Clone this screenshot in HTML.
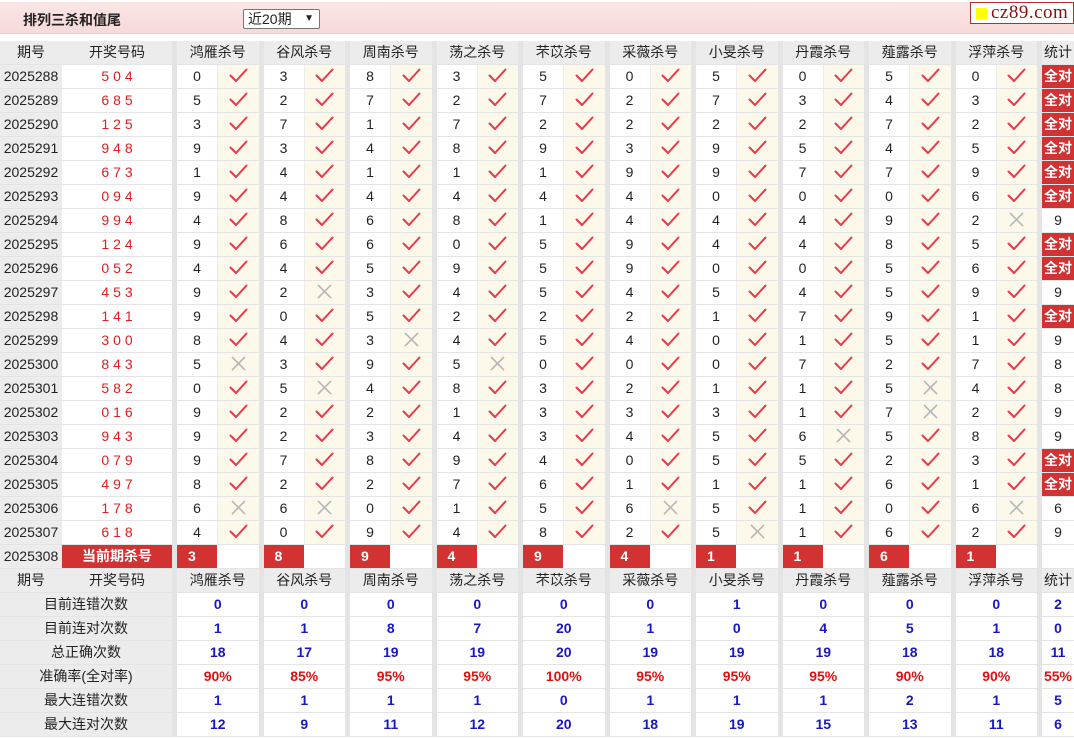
<!DOCTYPE html>
<html><head><meta charset="utf-8">
<style>
*{margin:0;padding:0;box-sizing:border-box}
body{width:1074px;height:738px;overflow:hidden;background:#fff;font-family:"Liberation Sans","Noto Sans CJK SC",sans-serif;font-size:14px;color:#222;position:relative}
.top{position:absolute;left:0;top:2px;width:1074px;height:32px;background:linear-gradient(#fbe6e6,#f7d9d9);border-bottom:1px solid #e9c9c9}
.title{position:absolute;left:23px;top:8px;font-weight:bold;font-size:14px;color:#222}
.sel{position:absolute;left:243px;top:7px;width:77px;height:20px;border:1px solid #777;background:#fff;border-radius:2px;font-size:14px;line-height:18px;padding-left:4px}
.sel b{position:absolute;right:5px;top:0;font-size:10px}
.logo{position:absolute;left:970px;top:0;width:104px;height:22px;background:#fff;border:1px solid #b03030;font-family:"Liberation Serif",serif;font-size:19px;color:#8a1010;line-height:20px;padding-left:20px;letter-spacing:0.5px}
.logo:before{content:"";position:absolute;left:5px;top:5px;width:11px;height:11px;background:#ffff00}
.tb{position:absolute;left:0;top:41px;width:1074px;background:#e4e4e4}
.r{display:flex;height:24px;padding-bottom:1px}
.r i{font-style:normal;display:block;height:23px;line-height:23px;text-align:center;white-space:nowrap;overflow:hidden}
.a{width:62px;background:#ececec}
.b{width:110px;background:#fff;margin-right:5px;color:#e02020;letter-spacing:4px;padding-left:4px}
.n{width:40px;background:#fff;text-align:center}
.c{width:41.5px;background:#fdf9ea;margin-right:5px;border-left:1px solid #ececec}
.s{width:32px;background:#fff}
.t{background:#d23232!important;color:#fff;font-weight:bold}
.h i{background:#ececec}
.h .g{width:81.5px;margin-right:5px;background:#ececec}
.h .b{color:#222;letter-spacing:0;background:#ececec;padding-left:0}
.cur .b{background:#d23232;color:#fff;font-weight:bold;letter-spacing:0;padding-left:0}
.cur .n{background:#d23232;color:#fff;font-weight:bold;text-align:left;padding-left:11px}
.cur .c{background:#fff;border-left:none}
.st i{font-weight:bold;color:#1818c0;font-size:14px}
.st .l{width:172px;margin-right:5px;background:#ececec;color:#222;font-weight:normal}
.st .g{width:81.5px;margin-right:5px;background:#fff}
.st .s{background:#fff}
.p i.g,.p i.s{color:#e01010}
svg{display:inline-block;vertical-align:middle;margin-top:-3px}
.k{width:19px;height:15px;fill:none;stroke:#e8384a;stroke-width:2;stroke-linecap:round;stroke-linejoin:round}
.x{width:15px;height:15px;fill:none;stroke:#b8b8b8;stroke-width:1.6}
</style></head><body>
<div class="top"><div class="title">排列三杀和值尾</div><div class="sel">近20期<b>&#9660;</b></div><div class="logo">cz89.com</div></div>
<div class="tb">
<div class="r h"><i class="a">期号</i><i class="b">开奖号码</i><i class="g">鸿雁杀号</i><i class="g">谷风杀号</i><i class="g">周南杀号</i><i class="g">荡之杀号</i><i class="g">芣苡杀号</i><i class="g">采薇杀号</i><i class="g">小旻杀号</i><i class="g">丹霞杀号</i><i class="g">薤露杀号</i><i class="g">浮萍杀号</i><i class="s">统计</i></div>

<div class="r"><i class="a">2025288</i><i class="b">504</i><i class="n">0</i><i class="c"><svg class="k" viewBox="0 0 19 15"><path d="M1.5 7.5L7 13L17.5 1.5"/></svg></i><i class="n">3</i><i class="c"><svg class="k" viewBox="0 0 19 15"><path d="M1.5 7.5L7 13L17.5 1.5"/></svg></i><i class="n">8</i><i class="c"><svg class="k" viewBox="0 0 19 15"><path d="M1.5 7.5L7 13L17.5 1.5"/></svg></i><i class="n">3</i><i class="c"><svg class="k" viewBox="0 0 19 15"><path d="M1.5 7.5L7 13L17.5 1.5"/></svg></i><i class="n">5</i><i class="c"><svg class="k" viewBox="0 0 19 15"><path d="M1.5 7.5L7 13L17.5 1.5"/></svg></i><i class="n">0</i><i class="c"><svg class="k" viewBox="0 0 19 15"><path d="M1.5 7.5L7 13L17.5 1.5"/></svg></i><i class="n">5</i><i class="c"><svg class="k" viewBox="0 0 19 15"><path d="M1.5 7.5L7 13L17.5 1.5"/></svg></i><i class="n">0</i><i class="c"><svg class="k" viewBox="0 0 19 15"><path d="M1.5 7.5L7 13L17.5 1.5"/></svg></i><i class="n">5</i><i class="c"><svg class="k" viewBox="0 0 19 15"><path d="M1.5 7.5L7 13L17.5 1.5"/></svg></i><i class="n">0</i><i class="c"><svg class="k" viewBox="0 0 19 15"><path d="M1.5 7.5L7 13L17.5 1.5"/></svg></i><i class="s t">全对</i></div>

<div class="r"><i class="a">2025289</i><i class="b">685</i><i class="n">5</i><i class="c"><svg class="k" viewBox="0 0 19 15"><path d="M1.5 7.5L7 13L17.5 1.5"/></svg></i><i class="n">2</i><i class="c"><svg class="k" viewBox="0 0 19 15"><path d="M1.5 7.5L7 13L17.5 1.5"/></svg></i><i class="n">7</i><i class="c"><svg class="k" viewBox="0 0 19 15"><path d="M1.5 7.5L7 13L17.5 1.5"/></svg></i><i class="n">2</i><i class="c"><svg class="k" viewBox="0 0 19 15"><path d="M1.5 7.5L7 13L17.5 1.5"/></svg></i><i class="n">7</i><i class="c"><svg class="k" viewBox="0 0 19 15"><path d="M1.5 7.5L7 13L17.5 1.5"/></svg></i><i class="n">2</i><i class="c"><svg class="k" viewBox="0 0 19 15"><path d="M1.5 7.5L7 13L17.5 1.5"/></svg></i><i class="n">7</i><i class="c"><svg class="k" viewBox="0 0 19 15"><path d="M1.5 7.5L7 13L17.5 1.5"/></svg></i><i class="n">3</i><i class="c"><svg class="k" viewBox="0 0 19 15"><path d="M1.5 7.5L7 13L17.5 1.5"/></svg></i><i class="n">4</i><i class="c"><svg class="k" viewBox="0 0 19 15"><path d="M1.5 7.5L7 13L17.5 1.5"/></svg></i><i class="n">3</i><i class="c"><svg class="k" viewBox="0 0 19 15"><path d="M1.5 7.5L7 13L17.5 1.5"/></svg></i><i class="s t">全对</i></div>

<div class="r"><i class="a">2025290</i><i class="b">125</i><i class="n">3</i><i class="c"><svg class="k" viewBox="0 0 19 15"><path d="M1.5 7.5L7 13L17.5 1.5"/></svg></i><i class="n">7</i><i class="c"><svg class="k" viewBox="0 0 19 15"><path d="M1.5 7.5L7 13L17.5 1.5"/></svg></i><i class="n">1</i><i class="c"><svg class="k" viewBox="0 0 19 15"><path d="M1.5 7.5L7 13L17.5 1.5"/></svg></i><i class="n">7</i><i class="c"><svg class="k" viewBox="0 0 19 15"><path d="M1.5 7.5L7 13L17.5 1.5"/></svg></i><i class="n">2</i><i class="c"><svg class="k" viewBox="0 0 19 15"><path d="M1.5 7.5L7 13L17.5 1.5"/></svg></i><i class="n">2</i><i class="c"><svg class="k" viewBox="0 0 19 15"><path d="M1.5 7.5L7 13L17.5 1.5"/></svg></i><i class="n">2</i><i class="c"><svg class="k" viewBox="0 0 19 15"><path d="M1.5 7.5L7 13L17.5 1.5"/></svg></i><i class="n">2</i><i class="c"><svg class="k" viewBox="0 0 19 15"><path d="M1.5 7.5L7 13L17.5 1.5"/></svg></i><i class="n">7</i><i class="c"><svg class="k" viewBox="0 0 19 15"><path d="M1.5 7.5L7 13L17.5 1.5"/></svg></i><i class="n">2</i><i class="c"><svg class="k" viewBox="0 0 19 15"><path d="M1.5 7.5L7 13L17.5 1.5"/></svg></i><i class="s t">全对</i></div>

<div class="r"><i class="a">2025291</i><i class="b">948</i><i class="n">9</i><i class="c"><svg class="k" viewBox="0 0 19 15"><path d="M1.5 7.5L7 13L17.5 1.5"/></svg></i><i class="n">3</i><i class="c"><svg class="k" viewBox="0 0 19 15"><path d="M1.5 7.5L7 13L17.5 1.5"/></svg></i><i class="n">4</i><i class="c"><svg class="k" viewBox="0 0 19 15"><path d="M1.5 7.5L7 13L17.5 1.5"/></svg></i><i class="n">8</i><i class="c"><svg class="k" viewBox="0 0 19 15"><path d="M1.5 7.5L7 13L17.5 1.5"/></svg></i><i class="n">9</i><i class="c"><svg class="k" viewBox="0 0 19 15"><path d="M1.5 7.5L7 13L17.5 1.5"/></svg></i><i class="n">3</i><i class="c"><svg class="k" viewBox="0 0 19 15"><path d="M1.5 7.5L7 13L17.5 1.5"/></svg></i><i class="n">9</i><i class="c"><svg class="k" viewBox="0 0 19 15"><path d="M1.5 7.5L7 13L17.5 1.5"/></svg></i><i class="n">5</i><i class="c"><svg class="k" viewBox="0 0 19 15"><path d="M1.5 7.5L7 13L17.5 1.5"/></svg></i><i class="n">4</i><i class="c"><svg class="k" viewBox="0 0 19 15"><path d="M1.5 7.5L7 13L17.5 1.5"/></svg></i><i class="n">5</i><i class="c"><svg class="k" viewBox="0 0 19 15"><path d="M1.5 7.5L7 13L17.5 1.5"/></svg></i><i class="s t">全对</i></div>

<div class="r"><i class="a">2025292</i><i class="b">673</i><i class="n">1</i><i class="c"><svg class="k" viewBox="0 0 19 15"><path d="M1.5 7.5L7 13L17.5 1.5"/></svg></i><i class="n">4</i><i class="c"><svg class="k" viewBox="0 0 19 15"><path d="M1.5 7.5L7 13L17.5 1.5"/></svg></i><i class="n">1</i><i class="c"><svg class="k" viewBox="0 0 19 15"><path d="M1.5 7.5L7 13L17.5 1.5"/></svg></i><i class="n">1</i><i class="c"><svg class="k" viewBox="0 0 19 15"><path d="M1.5 7.5L7 13L17.5 1.5"/></svg></i><i class="n">1</i><i class="c"><svg class="k" viewBox="0 0 19 15"><path d="M1.5 7.5L7 13L17.5 1.5"/></svg></i><i class="n">9</i><i class="c"><svg class="k" viewBox="0 0 19 15"><path d="M1.5 7.5L7 13L17.5 1.5"/></svg></i><i class="n">9</i><i class="c"><svg class="k" viewBox="0 0 19 15"><path d="M1.5 7.5L7 13L17.5 1.5"/></svg></i><i class="n">7</i><i class="c"><svg class="k" viewBox="0 0 19 15"><path d="M1.5 7.5L7 13L17.5 1.5"/></svg></i><i class="n">7</i><i class="c"><svg class="k" viewBox="0 0 19 15"><path d="M1.5 7.5L7 13L17.5 1.5"/></svg></i><i class="n">9</i><i class="c"><svg class="k" viewBox="0 0 19 15"><path d="M1.5 7.5L7 13L17.5 1.5"/></svg></i><i class="s t">全对</i></div>

<div class="r"><i class="a">2025293</i><i class="b">094</i><i class="n">9</i><i class="c"><svg class="k" viewBox="0 0 19 15"><path d="M1.5 7.5L7 13L17.5 1.5"/></svg></i><i class="n">4</i><i class="c"><svg class="k" viewBox="0 0 19 15"><path d="M1.5 7.5L7 13L17.5 1.5"/></svg></i><i class="n">4</i><i class="c"><svg class="k" viewBox="0 0 19 15"><path d="M1.5 7.5L7 13L17.5 1.5"/></svg></i><i class="n">4</i><i class="c"><svg class="k" viewBox="0 0 19 15"><path d="M1.5 7.5L7 13L17.5 1.5"/></svg></i><i class="n">4</i><i class="c"><svg class="k" viewBox="0 0 19 15"><path d="M1.5 7.5L7 13L17.5 1.5"/></svg></i><i class="n">4</i><i class="c"><svg class="k" viewBox="0 0 19 15"><path d="M1.5 7.5L7 13L17.5 1.5"/></svg></i><i class="n">0</i><i class="c"><svg class="k" viewBox="0 0 19 15"><path d="M1.5 7.5L7 13L17.5 1.5"/></svg></i><i class="n">0</i><i class="c"><svg class="k" viewBox="0 0 19 15"><path d="M1.5 7.5L7 13L17.5 1.5"/></svg></i><i class="n">0</i><i class="c"><svg class="k" viewBox="0 0 19 15"><path d="M1.5 7.5L7 13L17.5 1.5"/></svg></i><i class="n">6</i><i class="c"><svg class="k" viewBox="0 0 19 15"><path d="M1.5 7.5L7 13L17.5 1.5"/></svg></i><i class="s t">全对</i></div>

<div class="r"><i class="a">2025294</i><i class="b">994</i><i class="n">4</i><i class="c"><svg class="k" viewBox="0 0 19 15"><path d="M1.5 7.5L7 13L17.5 1.5"/></svg></i><i class="n">8</i><i class="c"><svg class="k" viewBox="0 0 19 15"><path d="M1.5 7.5L7 13L17.5 1.5"/></svg></i><i class="n">6</i><i class="c"><svg class="k" viewBox="0 0 19 15"><path d="M1.5 7.5L7 13L17.5 1.5"/></svg></i><i class="n">8</i><i class="c"><svg class="k" viewBox="0 0 19 15"><path d="M1.5 7.5L7 13L17.5 1.5"/></svg></i><i class="n">1</i><i class="c"><svg class="k" viewBox="0 0 19 15"><path d="M1.5 7.5L7 13L17.5 1.5"/></svg></i><i class="n">4</i><i class="c"><svg class="k" viewBox="0 0 19 15"><path d="M1.5 7.5L7 13L17.5 1.5"/></svg></i><i class="n">4</i><i class="c"><svg class="k" viewBox="0 0 19 15"><path d="M1.5 7.5L7 13L17.5 1.5"/></svg></i><i class="n">4</i><i class="c"><svg class="k" viewBox="0 0 19 15"><path d="M1.5 7.5L7 13L17.5 1.5"/></svg></i><i class="n">9</i><i class="c"><svg class="k" viewBox="0 0 19 15"><path d="M1.5 7.5L7 13L17.5 1.5"/></svg></i><i class="n">2</i><i class="c"><svg class="x" viewBox="0 0 15 15"><path d="M1 1L14 14M14 1L1 14"/></svg></i><i class="s">9</i></div>

<div class="r"><i class="a">2025295</i><i class="b">124</i><i class="n">9</i><i class="c"><svg class="k" viewBox="0 0 19 15"><path d="M1.5 7.5L7 13L17.5 1.5"/></svg></i><i class="n">6</i><i class="c"><svg class="k" viewBox="0 0 19 15"><path d="M1.5 7.5L7 13L17.5 1.5"/></svg></i><i class="n">6</i><i class="c"><svg class="k" viewBox="0 0 19 15"><path d="M1.5 7.5L7 13L17.5 1.5"/></svg></i><i class="n">0</i><i class="c"><svg class="k" viewBox="0 0 19 15"><path d="M1.5 7.5L7 13L17.5 1.5"/></svg></i><i class="n">5</i><i class="c"><svg class="k" viewBox="0 0 19 15"><path d="M1.5 7.5L7 13L17.5 1.5"/></svg></i><i class="n">9</i><i class="c"><svg class="k" viewBox="0 0 19 15"><path d="M1.5 7.5L7 13L17.5 1.5"/></svg></i><i class="n">4</i><i class="c"><svg class="k" viewBox="0 0 19 15"><path d="M1.5 7.5L7 13L17.5 1.5"/></svg></i><i class="n">4</i><i class="c"><svg class="k" viewBox="0 0 19 15"><path d="M1.5 7.5L7 13L17.5 1.5"/></svg></i><i class="n">8</i><i class="c"><svg class="k" viewBox="0 0 19 15"><path d="M1.5 7.5L7 13L17.5 1.5"/></svg></i><i class="n">5</i><i class="c"><svg class="k" viewBox="0 0 19 15"><path d="M1.5 7.5L7 13L17.5 1.5"/></svg></i><i class="s t">全对</i></div>

<div class="r"><i class="a">2025296</i><i class="b">052</i><i class="n">4</i><i class="c"><svg class="k" viewBox="0 0 19 15"><path d="M1.5 7.5L7 13L17.5 1.5"/></svg></i><i class="n">4</i><i class="c"><svg class="k" viewBox="0 0 19 15"><path d="M1.5 7.5L7 13L17.5 1.5"/></svg></i><i class="n">5</i><i class="c"><svg class="k" viewBox="0 0 19 15"><path d="M1.5 7.5L7 13L17.5 1.5"/></svg></i><i class="n">9</i><i class="c"><svg class="k" viewBox="0 0 19 15"><path d="M1.5 7.5L7 13L17.5 1.5"/></svg></i><i class="n">5</i><i class="c"><svg class="k" viewBox="0 0 19 15"><path d="M1.5 7.5L7 13L17.5 1.5"/></svg></i><i class="n">9</i><i class="c"><svg class="k" viewBox="0 0 19 15"><path d="M1.5 7.5L7 13L17.5 1.5"/></svg></i><i class="n">0</i><i class="c"><svg class="k" viewBox="0 0 19 15"><path d="M1.5 7.5L7 13L17.5 1.5"/></svg></i><i class="n">0</i><i class="c"><svg class="k" viewBox="0 0 19 15"><path d="M1.5 7.5L7 13L17.5 1.5"/></svg></i><i class="n">5</i><i class="c"><svg class="k" viewBox="0 0 19 15"><path d="M1.5 7.5L7 13L17.5 1.5"/></svg></i><i class="n">6</i><i class="c"><svg class="k" viewBox="0 0 19 15"><path d="M1.5 7.5L7 13L17.5 1.5"/></svg></i><i class="s t">全对</i></div>

<div class="r"><i class="a">2025297</i><i class="b">453</i><i class="n">9</i><i class="c"><svg class="k" viewBox="0 0 19 15"><path d="M1.5 7.5L7 13L17.5 1.5"/></svg></i><i class="n">2</i><i class="c"><svg class="x" viewBox="0 0 15 15"><path d="M1 1L14 14M14 1L1 14"/></svg></i><i class="n">3</i><i class="c"><svg class="k" viewBox="0 0 19 15"><path d="M1.5 7.5L7 13L17.5 1.5"/></svg></i><i class="n">4</i><i class="c"><svg class="k" viewBox="0 0 19 15"><path d="M1.5 7.5L7 13L17.5 1.5"/></svg></i><i class="n">5</i><i class="c"><svg class="k" viewBox="0 0 19 15"><path d="M1.5 7.5L7 13L17.5 1.5"/></svg></i><i class="n">4</i><i class="c"><svg class="k" viewBox="0 0 19 15"><path d="M1.5 7.5L7 13L17.5 1.5"/></svg></i><i class="n">5</i><i class="c"><svg class="k" viewBox="0 0 19 15"><path d="M1.5 7.5L7 13L17.5 1.5"/></svg></i><i class="n">4</i><i class="c"><svg class="k" viewBox="0 0 19 15"><path d="M1.5 7.5L7 13L17.5 1.5"/></svg></i><i class="n">5</i><i class="c"><svg class="k" viewBox="0 0 19 15"><path d="M1.5 7.5L7 13L17.5 1.5"/></svg></i><i class="n">9</i><i class="c"><svg class="k" viewBox="0 0 19 15"><path d="M1.5 7.5L7 13L17.5 1.5"/></svg></i><i class="s">9</i></div>

<div class="r"><i class="a">2025298</i><i class="b">141</i><i class="n">9</i><i class="c"><svg class="k" viewBox="0 0 19 15"><path d="M1.5 7.5L7 13L17.5 1.5"/></svg></i><i class="n">0</i><i class="c"><svg class="k" viewBox="0 0 19 15"><path d="M1.5 7.5L7 13L17.5 1.5"/></svg></i><i class="n">5</i><i class="c"><svg class="k" viewBox="0 0 19 15"><path d="M1.5 7.5L7 13L17.5 1.5"/></svg></i><i class="n">2</i><i class="c"><svg class="k" viewBox="0 0 19 15"><path d="M1.5 7.5L7 13L17.5 1.5"/></svg></i><i class="n">2</i><i class="c"><svg class="k" viewBox="0 0 19 15"><path d="M1.5 7.5L7 13L17.5 1.5"/></svg></i><i class="n">2</i><i class="c"><svg class="k" viewBox="0 0 19 15"><path d="M1.5 7.5L7 13L17.5 1.5"/></svg></i><i class="n">1</i><i class="c"><svg class="k" viewBox="0 0 19 15"><path d="M1.5 7.5L7 13L17.5 1.5"/></svg></i><i class="n">7</i><i class="c"><svg class="k" viewBox="0 0 19 15"><path d="M1.5 7.5L7 13L17.5 1.5"/></svg></i><i class="n">9</i><i class="c"><svg class="k" viewBox="0 0 19 15"><path d="M1.5 7.5L7 13L17.5 1.5"/></svg></i><i class="n">1</i><i class="c"><svg class="k" viewBox="0 0 19 15"><path d="M1.5 7.5L7 13L17.5 1.5"/></svg></i><i class="s t">全对</i></div>

<div class="r"><i class="a">2025299</i><i class="b">300</i><i class="n">8</i><i class="c"><svg class="k" viewBox="0 0 19 15"><path d="M1.5 7.5L7 13L17.5 1.5"/></svg></i><i class="n">4</i><i class="c"><svg class="k" viewBox="0 0 19 15"><path d="M1.5 7.5L7 13L17.5 1.5"/></svg></i><i class="n">3</i><i class="c"><svg class="x" viewBox="0 0 15 15"><path d="M1 1L14 14M14 1L1 14"/></svg></i><i class="n">4</i><i class="c"><svg class="k" viewBox="0 0 19 15"><path d="M1.5 7.5L7 13L17.5 1.5"/></svg></i><i class="n">5</i><i class="c"><svg class="k" viewBox="0 0 19 15"><path d="M1.5 7.5L7 13L17.5 1.5"/></svg></i><i class="n">4</i><i class="c"><svg class="k" viewBox="0 0 19 15"><path d="M1.5 7.5L7 13L17.5 1.5"/></svg></i><i class="n">0</i><i class="c"><svg class="k" viewBox="0 0 19 15"><path d="M1.5 7.5L7 13L17.5 1.5"/></svg></i><i class="n">1</i><i class="c"><svg class="k" viewBox="0 0 19 15"><path d="M1.5 7.5L7 13L17.5 1.5"/></svg></i><i class="n">5</i><i class="c"><svg class="k" viewBox="0 0 19 15"><path d="M1.5 7.5L7 13L17.5 1.5"/></svg></i><i class="n">1</i><i class="c"><svg class="k" viewBox="0 0 19 15"><path d="M1.5 7.5L7 13L17.5 1.5"/></svg></i><i class="s">9</i></div>

<div class="r"><i class="a">2025300</i><i class="b">843</i><i class="n">5</i><i class="c"><svg class="x" viewBox="0 0 15 15"><path d="M1 1L14 14M14 1L1 14"/></svg></i><i class="n">3</i><i class="c"><svg class="k" viewBox="0 0 19 15"><path d="M1.5 7.5L7 13L17.5 1.5"/></svg></i><i class="n">9</i><i class="c"><svg class="k" viewBox="0 0 19 15"><path d="M1.5 7.5L7 13L17.5 1.5"/></svg></i><i class="n">5</i><i class="c"><svg class="x" viewBox="0 0 15 15"><path d="M1 1L14 14M14 1L1 14"/></svg></i><i class="n">0</i><i class="c"><svg class="k" viewBox="0 0 19 15"><path d="M1.5 7.5L7 13L17.5 1.5"/></svg></i><i class="n">0</i><i class="c"><svg class="k" viewBox="0 0 19 15"><path d="M1.5 7.5L7 13L17.5 1.5"/></svg></i><i class="n">0</i><i class="c"><svg class="k" viewBox="0 0 19 15"><path d="M1.5 7.5L7 13L17.5 1.5"/></svg></i><i class="n">7</i><i class="c"><svg class="k" viewBox="0 0 19 15"><path d="M1.5 7.5L7 13L17.5 1.5"/></svg></i><i class="n">2</i><i class="c"><svg class="k" viewBox="0 0 19 15"><path d="M1.5 7.5L7 13L17.5 1.5"/></svg></i><i class="n">7</i><i class="c"><svg class="k" viewBox="0 0 19 15"><path d="M1.5 7.5L7 13L17.5 1.5"/></svg></i><i class="s">8</i></div>

<div class="r"><i class="a">2025301</i><i class="b">582</i><i class="n">0</i><i class="c"><svg class="k" viewBox="0 0 19 15"><path d="M1.5 7.5L7 13L17.5 1.5"/></svg></i><i class="n">5</i><i class="c"><svg class="x" viewBox="0 0 15 15"><path d="M1 1L14 14M14 1L1 14"/></svg></i><i class="n">4</i><i class="c"><svg class="k" viewBox="0 0 19 15"><path d="M1.5 7.5L7 13L17.5 1.5"/></svg></i><i class="n">8</i><i class="c"><svg class="k" viewBox="0 0 19 15"><path d="M1.5 7.5L7 13L17.5 1.5"/></svg></i><i class="n">3</i><i class="c"><svg class="k" viewBox="0 0 19 15"><path d="M1.5 7.5L7 13L17.5 1.5"/></svg></i><i class="n">2</i><i class="c"><svg class="k" viewBox="0 0 19 15"><path d="M1.5 7.5L7 13L17.5 1.5"/></svg></i><i class="n">1</i><i class="c"><svg class="k" viewBox="0 0 19 15"><path d="M1.5 7.5L7 13L17.5 1.5"/></svg></i><i class="n">1</i><i class="c"><svg class="k" viewBox="0 0 19 15"><path d="M1.5 7.5L7 13L17.5 1.5"/></svg></i><i class="n">5</i><i class="c"><svg class="x" viewBox="0 0 15 15"><path d="M1 1L14 14M14 1L1 14"/></svg></i><i class="n">4</i><i class="c"><svg class="k" viewBox="0 0 19 15"><path d="M1.5 7.5L7 13L17.5 1.5"/></svg></i><i class="s">8</i></div>

<div class="r"><i class="a">2025302</i><i class="b">016</i><i class="n">9</i><i class="c"><svg class="k" viewBox="0 0 19 15"><path d="M1.5 7.5L7 13L17.5 1.5"/></svg></i><i class="n">2</i><i class="c"><svg class="k" viewBox="0 0 19 15"><path d="M1.5 7.5L7 13L17.5 1.5"/></svg></i><i class="n">2</i><i class="c"><svg class="k" viewBox="0 0 19 15"><path d="M1.5 7.5L7 13L17.5 1.5"/></svg></i><i class="n">1</i><i class="c"><svg class="k" viewBox="0 0 19 15"><path d="M1.5 7.5L7 13L17.5 1.5"/></svg></i><i class="n">3</i><i class="c"><svg class="k" viewBox="0 0 19 15"><path d="M1.5 7.5L7 13L17.5 1.5"/></svg></i><i class="n">3</i><i class="c"><svg class="k" viewBox="0 0 19 15"><path d="M1.5 7.5L7 13L17.5 1.5"/></svg></i><i class="n">3</i><i class="c"><svg class="k" viewBox="0 0 19 15"><path d="M1.5 7.5L7 13L17.5 1.5"/></svg></i><i class="n">1</i><i class="c"><svg class="k" viewBox="0 0 19 15"><path d="M1.5 7.5L7 13L17.5 1.5"/></svg></i><i class="n">7</i><i class="c"><svg class="x" viewBox="0 0 15 15"><path d="M1 1L14 14M14 1L1 14"/></svg></i><i class="n">2</i><i class="c"><svg class="k" viewBox="0 0 19 15"><path d="M1.5 7.5L7 13L17.5 1.5"/></svg></i><i class="s">9</i></div>

<div class="r"><i class="a">2025303</i><i class="b">943</i><i class="n">9</i><i class="c"><svg class="k" viewBox="0 0 19 15"><path d="M1.5 7.5L7 13L17.5 1.5"/></svg></i><i class="n">2</i><i class="c"><svg class="k" viewBox="0 0 19 15"><path d="M1.5 7.5L7 13L17.5 1.5"/></svg></i><i class="n">3</i><i class="c"><svg class="k" viewBox="0 0 19 15"><path d="M1.5 7.5L7 13L17.5 1.5"/></svg></i><i class="n">4</i><i class="c"><svg class="k" viewBox="0 0 19 15"><path d="M1.5 7.5L7 13L17.5 1.5"/></svg></i><i class="n">3</i><i class="c"><svg class="k" viewBox="0 0 19 15"><path d="M1.5 7.5L7 13L17.5 1.5"/></svg></i><i class="n">4</i><i class="c"><svg class="k" viewBox="0 0 19 15"><path d="M1.5 7.5L7 13L17.5 1.5"/></svg></i><i class="n">5</i><i class="c"><svg class="k" viewBox="0 0 19 15"><path d="M1.5 7.5L7 13L17.5 1.5"/></svg></i><i class="n">6</i><i class="c"><svg class="x" viewBox="0 0 15 15"><path d="M1 1L14 14M14 1L1 14"/></svg></i><i class="n">5</i><i class="c"><svg class="k" viewBox="0 0 19 15"><path d="M1.5 7.5L7 13L17.5 1.5"/></svg></i><i class="n">8</i><i class="c"><svg class="k" viewBox="0 0 19 15"><path d="M1.5 7.5L7 13L17.5 1.5"/></svg></i><i class="s">9</i></div>

<div class="r"><i class="a">2025304</i><i class="b">079</i><i class="n">9</i><i class="c"><svg class="k" viewBox="0 0 19 15"><path d="M1.5 7.5L7 13L17.5 1.5"/></svg></i><i class="n">7</i><i class="c"><svg class="k" viewBox="0 0 19 15"><path d="M1.5 7.5L7 13L17.5 1.5"/></svg></i><i class="n">8</i><i class="c"><svg class="k" viewBox="0 0 19 15"><path d="M1.5 7.5L7 13L17.5 1.5"/></svg></i><i class="n">9</i><i class="c"><svg class="k" viewBox="0 0 19 15"><path d="M1.5 7.5L7 13L17.5 1.5"/></svg></i><i class="n">4</i><i class="c"><svg class="k" viewBox="0 0 19 15"><path d="M1.5 7.5L7 13L17.5 1.5"/></svg></i><i class="n">0</i><i class="c"><svg class="k" viewBox="0 0 19 15"><path d="M1.5 7.5L7 13L17.5 1.5"/></svg></i><i class="n">5</i><i class="c"><svg class="k" viewBox="0 0 19 15"><path d="M1.5 7.5L7 13L17.5 1.5"/></svg></i><i class="n">5</i><i class="c"><svg class="k" viewBox="0 0 19 15"><path d="M1.5 7.5L7 13L17.5 1.5"/></svg></i><i class="n">2</i><i class="c"><svg class="k" viewBox="0 0 19 15"><path d="M1.5 7.5L7 13L17.5 1.5"/></svg></i><i class="n">3</i><i class="c"><svg class="k" viewBox="0 0 19 15"><path d="M1.5 7.5L7 13L17.5 1.5"/></svg></i><i class="s t">全对</i></div>

<div class="r"><i class="a">2025305</i><i class="b">497</i><i class="n">8</i><i class="c"><svg class="k" viewBox="0 0 19 15"><path d="M1.5 7.5L7 13L17.5 1.5"/></svg></i><i class="n">2</i><i class="c"><svg class="k" viewBox="0 0 19 15"><path d="M1.5 7.5L7 13L17.5 1.5"/></svg></i><i class="n">2</i><i class="c"><svg class="k" viewBox="0 0 19 15"><path d="M1.5 7.5L7 13L17.5 1.5"/></svg></i><i class="n">7</i><i class="c"><svg class="k" viewBox="0 0 19 15"><path d="M1.5 7.5L7 13L17.5 1.5"/></svg></i><i class="n">6</i><i class="c"><svg class="k" viewBox="0 0 19 15"><path d="M1.5 7.5L7 13L17.5 1.5"/></svg></i><i class="n">1</i><i class="c"><svg class="k" viewBox="0 0 19 15"><path d="M1.5 7.5L7 13L17.5 1.5"/></svg></i><i class="n">1</i><i class="c"><svg class="k" viewBox="0 0 19 15"><path d="M1.5 7.5L7 13L17.5 1.5"/></svg></i><i class="n">1</i><i class="c"><svg class="k" viewBox="0 0 19 15"><path d="M1.5 7.5L7 13L17.5 1.5"/></svg></i><i class="n">6</i><i class="c"><svg class="k" viewBox="0 0 19 15"><path d="M1.5 7.5L7 13L17.5 1.5"/></svg></i><i class="n">1</i><i class="c"><svg class="k" viewBox="0 0 19 15"><path d="M1.5 7.5L7 13L17.5 1.5"/></svg></i><i class="s t">全对</i></div>

<div class="r"><i class="a">2025306</i><i class="b">178</i><i class="n">6</i><i class="c"><svg class="x" viewBox="0 0 15 15"><path d="M1 1L14 14M14 1L1 14"/></svg></i><i class="n">6</i><i class="c"><svg class="x" viewBox="0 0 15 15"><path d="M1 1L14 14M14 1L1 14"/></svg></i><i class="n">0</i><i class="c"><svg class="k" viewBox="0 0 19 15"><path d="M1.5 7.5L7 13L17.5 1.5"/></svg></i><i class="n">1</i><i class="c"><svg class="k" viewBox="0 0 19 15"><path d="M1.5 7.5L7 13L17.5 1.5"/></svg></i><i class="n">5</i><i class="c"><svg class="k" viewBox="0 0 19 15"><path d="M1.5 7.5L7 13L17.5 1.5"/></svg></i><i class="n">6</i><i class="c"><svg class="x" viewBox="0 0 15 15"><path d="M1 1L14 14M14 1L1 14"/></svg></i><i class="n">5</i><i class="c"><svg class="k" viewBox="0 0 19 15"><path d="M1.5 7.5L7 13L17.5 1.5"/></svg></i><i class="n">1</i><i class="c"><svg class="k" viewBox="0 0 19 15"><path d="M1.5 7.5L7 13L17.5 1.5"/></svg></i><i class="n">0</i><i class="c"><svg class="k" viewBox="0 0 19 15"><path d="M1.5 7.5L7 13L17.5 1.5"/></svg></i><i class="n">6</i><i class="c"><svg class="x" viewBox="0 0 15 15"><path d="M1 1L14 14M14 1L1 14"/></svg></i><i class="s">6</i></div>

<div class="r"><i class="a">2025307</i><i class="b">618</i><i class="n">4</i><i class="c"><svg class="k" viewBox="0 0 19 15"><path d="M1.5 7.5L7 13L17.5 1.5"/></svg></i><i class="n">0</i><i class="c"><svg class="k" viewBox="0 0 19 15"><path d="M1.5 7.5L7 13L17.5 1.5"/></svg></i><i class="n">9</i><i class="c"><svg class="k" viewBox="0 0 19 15"><path d="M1.5 7.5L7 13L17.5 1.5"/></svg></i><i class="n">4</i><i class="c"><svg class="k" viewBox="0 0 19 15"><path d="M1.5 7.5L7 13L17.5 1.5"/></svg></i><i class="n">8</i><i class="c"><svg class="k" viewBox="0 0 19 15"><path d="M1.5 7.5L7 13L17.5 1.5"/></svg></i><i class="n">2</i><i class="c"><svg class="k" viewBox="0 0 19 15"><path d="M1.5 7.5L7 13L17.5 1.5"/></svg></i><i class="n">5</i><i class="c"><svg class="x" viewBox="0 0 15 15"><path d="M1 1L14 14M14 1L1 14"/></svg></i><i class="n">1</i><i class="c"><svg class="k" viewBox="0 0 19 15"><path d="M1.5 7.5L7 13L17.5 1.5"/></svg></i><i class="n">6</i><i class="c"><svg class="k" viewBox="0 0 19 15"><path d="M1.5 7.5L7 13L17.5 1.5"/></svg></i><i class="n">2</i><i class="c"><svg class="k" viewBox="0 0 19 15"><path d="M1.5 7.5L7 13L17.5 1.5"/></svg></i><i class="s">9</i></div>

<div class="r cur"><i class="a">2025308</i><i class="b">当前期杀号</i><i class="n">3</i><i class="c"></i><i class="n">8</i><i class="c"></i><i class="n">9</i><i class="c"></i><i class="n">4</i><i class="c"></i><i class="n">9</i><i class="c"></i><i class="n">4</i><i class="c"></i><i class="n">1</i><i class="c"></i><i class="n">1</i><i class="c"></i><i class="n">6</i><i class="c"></i><i class="n">1</i><i class="c"></i><i class="s"></i></div>

<div class="r h"><i class="a">期号</i><i class="b">开奖号码</i><i class="g">鸿雁杀号</i><i class="g">谷风杀号</i><i class="g">周南杀号</i><i class="g">荡之杀号</i><i class="g">芣苡杀号</i><i class="g">采薇杀号</i><i class="g">小旻杀号</i><i class="g">丹霞杀号</i><i class="g">薤露杀号</i><i class="g">浮萍杀号</i><i class="s">统计</i></div>

<div class="r st"><i class="l">目前连错次数</i><i class="g">0</i><i class="g">0</i><i class="g">0</i><i class="g">0</i><i class="g">0</i><i class="g">0</i><i class="g">1</i><i class="g">0</i><i class="g">0</i><i class="g">0</i><i class="s">2</i></div>
<div class="r st"><i class="l">目前连对次数</i><i class="g">1</i><i class="g">1</i><i class="g">8</i><i class="g">7</i><i class="g">20</i><i class="g">1</i><i class="g">0</i><i class="g">4</i><i class="g">5</i><i class="g">1</i><i class="s">0</i></div>
<div class="r st"><i class="l">总正确次数</i><i class="g">18</i><i class="g">17</i><i class="g">19</i><i class="g">19</i><i class="g">20</i><i class="g">19</i><i class="g">19</i><i class="g">19</i><i class="g">18</i><i class="g">18</i><i class="s">11</i></div>
<div class="r st p"><i class="l">准确率(全对率)</i><i class="g">90%</i><i class="g">85%</i><i class="g">95%</i><i class="g">95%</i><i class="g">100%</i><i class="g">95%</i><i class="g">95%</i><i class="g">95%</i><i class="g">90%</i><i class="g">90%</i><i class="s">55%</i></div>
<div class="r st"><i class="l">最大连错次数</i><i class="g">1</i><i class="g">1</i><i class="g">1</i><i class="g">1</i><i class="g">0</i><i class="g">1</i><i class="g">1</i><i class="g">1</i><i class="g">2</i><i class="g">1</i><i class="s">5</i></div>
<div class="r st"><i class="l">最大连对次数</i><i class="g">12</i><i class="g">9</i><i class="g">11</i><i class="g">12</i><i class="g">20</i><i class="g">18</i><i class="g">19</i><i class="g">15</i><i class="g">13</i><i class="g">11</i><i class="s">6</i></div>
</div>
</body></html>
